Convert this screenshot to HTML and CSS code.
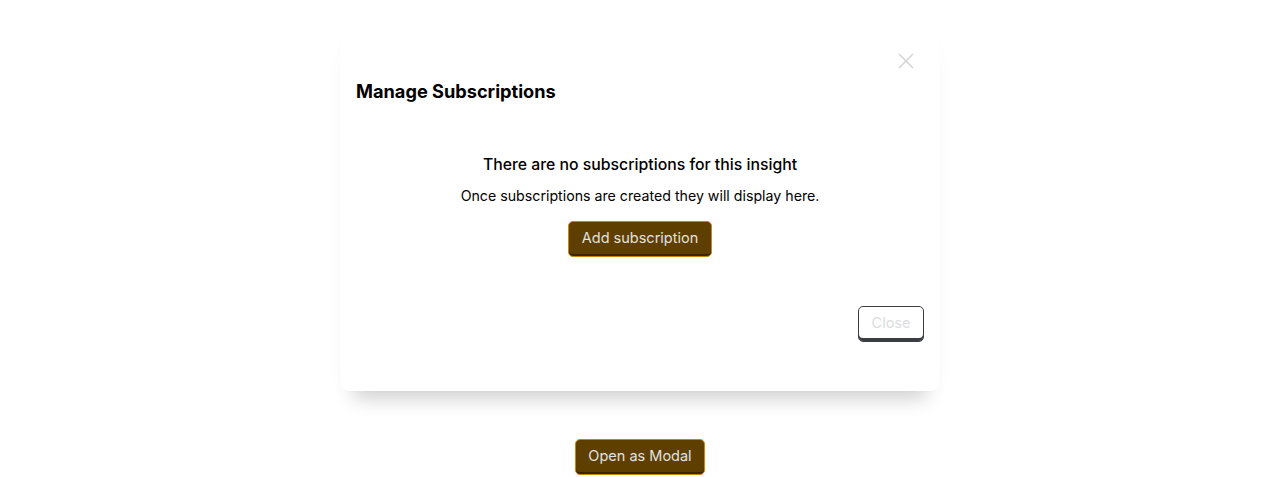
FILE: index.html
```html
<!DOCTYPE html>
<html>
<head>
<meta charset="utf-8">
<link rel="stylesheet" href="styles.css">
</head>
<body>
<div class="page">
  <div class="card">
    <button class="close-x" aria-label="Close">
      <svg width="16" height="16" viewBox="0 0 16 16"><path d="M1 1L15 15M15 1L1 15" stroke="#d4d4d4" stroke-width="1.5" fill="none"/></svg>
    </button>
    <h2 class="title">Manage Subscriptions</h2>
    <div class="empty">
      <div class="empty-title">There are no subscriptions for this insight</div>
      <div class="empty-sub">Once subscriptions are created they will display here.</div>
      <button class="btn btn-primary add-btn">Add subscription</button>
    </div>
    <div class="footer">
      <button class="btn btn-secondary">Close</button>
    </div>
  </div>
  <button class="btn btn-primary open-btn">Open as Modal</button>
</div>
</body>
</html>
```
FILE: styles.css
```css
* { box-sizing: border-box; }
html, body { margin: 0; padding: 0; background: #fff; }
body { font-family: Inter, "Noto Sans", sans-serif; color: #000; }
.page {
  display: flex;
  flex-direction: column;
  align-items: center;
  padding-top: 32px;
}
.card {
  position: relative;
  width: 600px;
  height: 359px;
  background: #fff;
  border-radius: 8px;
  padding: 0 16px;
  box-shadow: 0 22px 18px -14px rgba(0,0,0,0.16), 0 10px 24px -8px rgba(0,0,0,0.04), 0 0 2px rgba(0,0,0,0.02);
  display: flex;
  flex-direction: column;
}
.close-x {
  position: absolute;
  top: 20px;
  right: 25px;
  width: 18px;
  height: 18px;
  padding: 0;
  border: 0;
  background: transparent;
  display: flex;
  align-items: center;
  justify-content: center;
}
.title {
  margin: 45px 0 0;
  font-size: 18.2px;
  line-height: 28px;
  font-weight: 700;
}
.empty {
  display: flex;
  flex-direction: column;
  align-items: center;
  margin-top: 48px;
}
.empty-title {
  font-size: 15.8px;
  line-height: 24px;
  font-weight: 500;
}
.empty-sub {
  margin-top: 9px;
  font-size: 14.2px;
  line-height: 20px;
}
.btn {
  font-family: Inter, "Noto Sans", sans-serif;
  font-size: 14.5px;
  height: 36px;
  padding: 0 12px 4px;
  border-radius: 5px;
  cursor: pointer;
}
.btn-primary {
  background: #5f3f00;
  color: #e2e2e2;
  border: 1px solid #c8880a;
  box-shadow: inset 0 -2px 0 #3a2600;
}
.add-btn {
  margin-top: 15px;
  width: 144px;
  padding: 0 0 4px;
}
.footer {
  display: flex;
  justify-content: flex-end;
  margin-top: 49px;
}
.btn-secondary {
  background: #fff;
  color: #dcdcdc;
  border: 1px solid #3b3d42;
  box-shadow: inset 0 -3px 0 #3b3d42;
  width: 66px;
  padding: 0 0 3px;
}
.open-btn {
  margin-top: 48px;
  width: 130px;
  padding: 0 0 3px;
}
```
